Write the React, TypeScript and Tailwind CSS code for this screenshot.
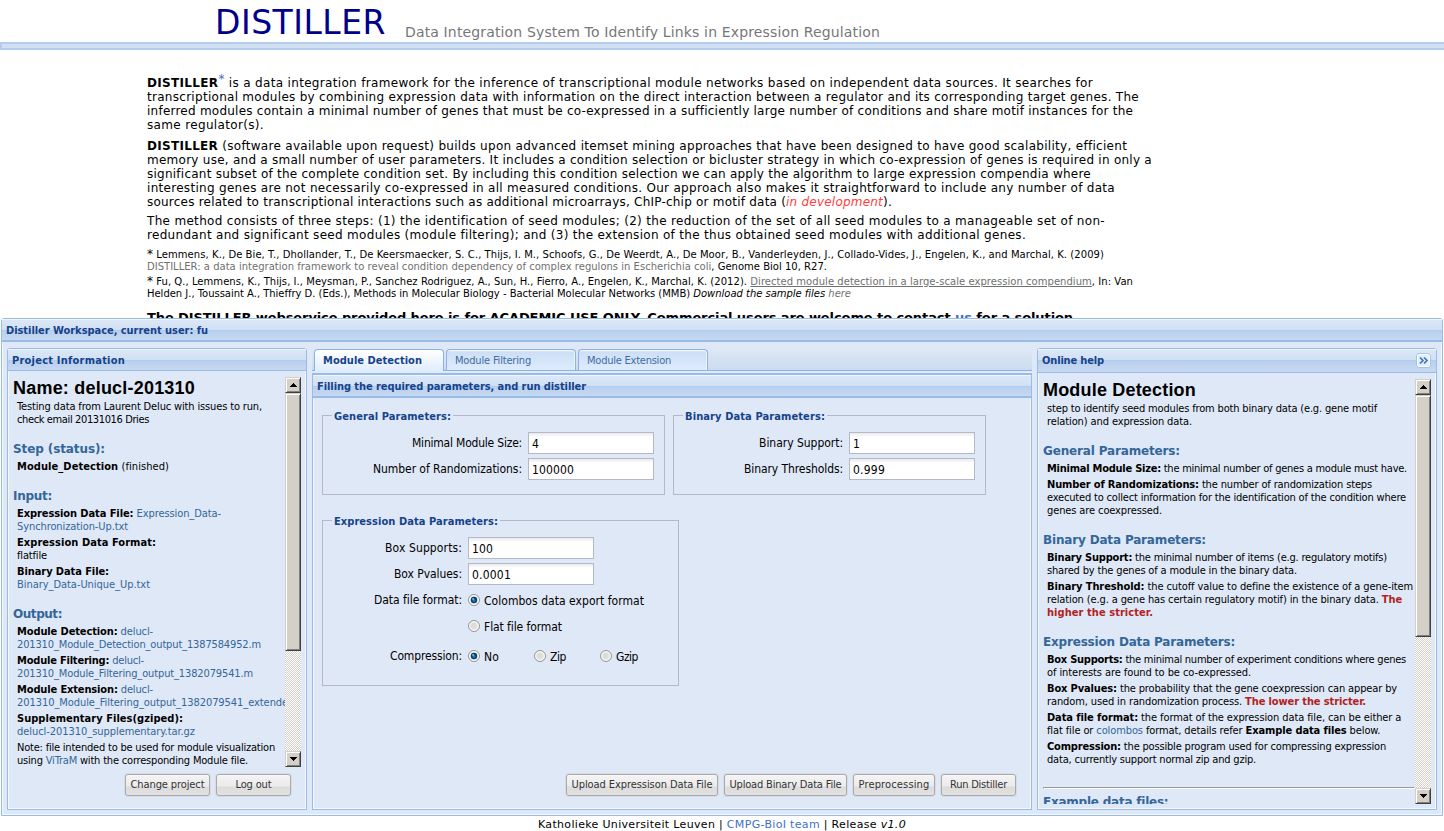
import { useLayoutEffect, useRef, type ReactNode } from "react";

/* One line of text whose tracking is adjusted so that it spans `w` pixels. */
function Fit({ w, children, className = "" }: { w: number; children: ReactNode; className?: string }) {
  const ref = useRef<HTMLSpanElement>(null);
  useLayoutEffect(() => {
    const el = ref.current;
    if (!el) return;
    el.style.letterSpacing = "0px";
    const natural = el.getBoundingClientRect().width;
    const count = Math.max(1, (el.textContent ?? "").length);
    el.style.letterSpacing = `${(w - natural) / count}px`;
  }, [w]);
  return (
    <span className={`block w-max ${className}`}>
      <span ref={ref} className="inline-block whitespace-pre">{children}</span>
    </span>
  );
}

const verdana = "font-['DejaVu_Sans',sans-serif]";
const tahoma = "font-['DejaVu_Sans_Condensed','DejaVu_Sans',sans-serif] [font-stretch:condensed]";
const headerFill =
  "bg-[linear-gradient(to_bottom,#f0f6fc_0,#f0f6fc_1px,#dae7f6_1px,#d1e0f3_11px,#aac8ec_11px,#b9d0ee_12px,#c6d8f1_21px)]";

function Link({ children }: { children: ReactNode }) {
  return <span className="text-[#336699]">{children}</span>;
}

function H3({ w, children }: { w: number; children: ReactNode }) {
  return (
    <h3 className="mt-4 mb-1 text-[12px] leading-[14px] font-bold text-[#336699] font-['DejaVu_Sans',sans-serif] [font-stretch:normal]">
      <Fit w={w}>{children}</Fit>
    </h3>
  );
}

function Para({ children }: { children: ReactNode }) {
  return <div className="mb-[3px] ml-1 text-[11px] leading-[13px] last:mb-0">{children}</div>;
}

function Section({ children }: { children: ReactNode }) {
  return <div className="flex flex-col">{children}</div>;
}

function Arrow({ up }: { up?: boolean }) {
  return (
    <div className="flex h-4 w-4 shrink-0 items-center justify-center border border-t-[#d4d0c8] border-l-[#d4d0c8] border-r-[#404040] border-b-[#404040] bg-[#d4d0c8] shadow-[inset_1px_1px_0_#fff,inset_-1px_-1px_0_#808080]">
      <svg width="7" height="4" viewBox="0 0 7 4" shapeRendering="crispEdges">
        <path d={up ? "M3 0h1v1h1v1h1v1h1v1H0V3h1V2h1V1h1z" : "M0 0h7v1H6v1H5v1H4v1H3V3H2V2H1V1H0z"} fill="#000" />
      </svg>
    </div>
  );
}

function Scrollbar({ thumb }: { thumb: string }) {
  return (
    <div className="flex w-4 shrink-0 flex-col bg-[#eae8e3] bg-[repeating-conic-gradient(#d4d0c8_0_25%,#fff_0_50%)] bg-[length:2px_2px]">
      <Arrow up />
      <div className={`${thumb} w-4 shrink-0 border border-t-[#d4d0c8] border-l-[#d4d0c8] border-r-[#404040] border-b-[#404040] bg-[#d4d0c8] shadow-[inset_1px_1px_0_#fff,inset_-1px_-1px_0_#808080]`} />
      <div className="flex-1" />
      <Arrow />
    </div>
  );
}

function Button({ box, w, children }: { box: string; w: number; children: ReactNode }) {
  return (
    <button className={`${box} flex h-[22px] items-center justify-center rounded-[3px] border border-[#aaa] bg-[linear-gradient(to_bottom,#fff_0,#f3f3f3_1px,#ebebeb_11px,#dcdcdc_12px,#e2e2e2_20px)] pt-px text-[11px] text-[#333] shadow-[0_0_0_1px_#d6dbe4]`}>
      <Fit w={w}>{children}</Fit>
    </button>
  );
}

function Field({ label, lw, labelBox, value, vw }: { label: string; lw: number; labelBox: string; value: string; vw: number }) {
  return (
    <div className="flex h-[26px] items-start">
      <div className={`${labelBox} flex justify-end pr-1.5 pt-[3px] leading-4`}>
        <Fit w={lw}>{label}</Fit>
      </div>
      <div className="h-[22px] w-[126px] border border-[#b5b8c8] bg-[linear-gradient(to_bottom,#e8eae8,#fff_4px)] pl-[3px] pt-[3px] leading-4">
        <Fit w={vw}>{value}</Fit>
      </div>
    </div>
  );
}

function Radio({ label, w, on }: { label: string; w: number; on?: boolean }) {
  return (
    <div className="flex h-4 w-[66px] items-center">
      <svg className="shrink-0" width="12" height="12" viewBox="0 0 12 12">
        <circle cx="6" cy="6" r="5.5" fill="#e4e4e2" stroke="#969696" />
        <circle cx="6" cy="6" r="4.3" fill="none" stroke="#fafafa" strokeWidth="1" />
        <circle cx="5.6" cy="5.6" r="2.6" fill="#dcdcda" />
        {on && <circle cx="6" cy="6" r="3.2" fill="#0b3d69" />}
        {on && <circle cx="6" cy="6.4" r="1.6" fill="#1b78b0" />}
        {on && <circle cx="5.1" cy="4.9" r="0.9" fill="#8ed4f2" />}
      </svg>
      <div className="pt-0.5 pl-1 leading-4"><Fit w={w}>{label}</Fit></div>
    </div>
  );
}

function Fieldset({ box, legend, w, children }: { box: string; legend: string; w: number; children: ReactNode }) {
  return (
    <fieldset className={`${box} border border-[#b5b8c8] text-[12px] text-black`}>
      <legend className="ml-[9px] h-[13px] px-0.5 text-[11px] leading-[15px] font-bold text-[#15428b]">
        <Fit w={w}>{legend}</Fit>
      </legend>
      {children}
    </fieldset>
  );
}

function Tab({ w, children, active }: { w: number; children: ReactNode; active?: boolean }) {
  return (
    <div
      className={
        active
          ? "h-[23px] w-[130px] rounded-t-[4px] border border-b-0 border-[#8db2e3] bg-[linear-gradient(to_bottom,#fff,#deecfd)] pl-2 text-[11px] leading-[21px] font-bold text-[#15428b]"
          : "h-[21px] w-[130px] rounded-t-[4px] border border-b-0 border-[#8db2e3] bg-[linear-gradient(to_bottom,#fafcff_0,#cddff5_2px,#deecfd)] pl-2 text-[11px] leading-[21px] text-[#416aa3] shadow-[inset_-1px_0_0_#eef5fe]"
      }
    >
      <Fit w={w}>{children}</Fit>
    </div>
  );
}

export default function App() {
  return (
    <div className={`relative flex h-[831px] w-[1444px] flex-col overflow-hidden bg-white text-black ${verdana}`}>
      <header className="flex h-[42px] shrink-0 items-start pl-[215px]">
        <h1 className="w-[190px] pt-1 text-[33px] leading-[38px] text-[#00008b]"><Fit w={171}>DISTILLER</Fit></h1>
        <div className="pt-[23px] text-[14px] leading-[18px] text-[#777]">
          <Fit w={475}>Data Integration System To Identify Links in Expression Regulation</Fit>
        </div>
      </header>
      <div className="h-2 shrink-0 border-2 border-r-0 border-[#b3cdee] bg-[#d0e0f2]" />

      <main className="h-[268px] shrink-0 overflow-hidden pt-[26px] pl-[147px] text-[12px] leading-[14px]">
        <div className="mb-[7px]">
          <Fit w={946}><b>DISTILLER</b><span className="relative -top-1 text-[12px] leading-none text-[#4070c8]">*</span> is a data integration framework for the inference of transcriptional module networks based on independent data sources. It searches for</Fit>
          <Fit w={992}>transcriptional modules by combining expression data with information on the direct interaction between a regulator and its corresponding target genes. The</Fit>
          <Fit w={986}>inferred modules contain a minimal number of genes that must be co-expressed in a sufficiently large number of conditions and share motif instances for the</Fit>
          <Fit w={117}>same regulator(s).</Fit>
        </div>
        <div className="mb-[5px]">
          <Fit w={980}><b>DISTILLER</b> (software available upon request) builds upon advanced itemset mining approaches that have been designed to have good scalability, efficient</Fit>
          <Fit w={1005}>memory use, and a small number of user parameters. It includes a condition selection or bicluster strategy in which co-expression of genes is required in only a</Fit>
          <Fit w={944}>significant subset of the complete condition set. By including this condition selection we can apply the algorithm to large expression compendia where</Fit>
          <Fit w={968}>interesting genes are not necessarily co-expressed in all measured conditions. Our approach also makes it straightforward to include any number of data</Fit>
          <Fit w={745}>sources related to transcriptional interactions such as additional microarrays, ChIP-chip or motif data (<i className="text-[#ff4040]">in development</i>).</Fit>
        </div>
        <div className="mb-1.5">
          <Fit w={958}>The method consists of three steps: (1) the identification of seed modules; (2) the reduction of the set of all seed modules to a manageable set of non-</Fit>
          <Fit w={879}>redundant and significant seed modules (module filtering); and (3) the extension of the thus obtained seed modules with additional genes.</Fit>
        </div>
        <div className="mb-0.5 text-[10px] leading-[12px]">
          <Fit w={957}><span className="text-[12px] leading-none">*</span> Lemmens, K., De Bie, T., Dhollander, T., De Keersmaecker, S. C., Thijs, I. M., Schoofs, G., De Weerdt, A., De Moor, B., Vanderleyden, J., Collado-Vides, J., Engelen, K., and Marchal, K. (2009)</Fit>
          <Fit w={680}><span className="text-[#707070]">DISTILLER: a data integration framework to reveal condition dependency of complex regulons in Escherichia coli</span>, Genome Biol 10, R27.</Fit>
        </div>
        <div className="mb-2.5 text-[10px] leading-[12px]">
          <Fit w={986}><span className="text-[12px] leading-none">*</span> Fu, Q., Lemmens, K., Thijs, I., Meysman, P., Sanchez Rodriguez, A., Sun, H., Fierro, A., Engelen, K., Marchal, K. (2012). <span className="text-[#707070] underline">Directed module detection in a large-scale expression compendium</span>, In: Van</Fit>
          <Fit w={704}>Helden J., Toussaint A., Thieffry D. (Eds.), Methods in Molecular Biology - Bacterial Molecular Networks (MMB) <i>Download the sample files <span className="text-[#707070]">here</span></i></Fit>
        </div>
        <div className="text-[13px] leading-[16px] font-bold">
          <Fit w={926}>The DISTILLER webservice provided here is for ACADEMIC USE ONLY. Commercial users are welcome to contact <span className="text-[#4070c8]">us</span> for a solution</Fit>
        </div>
      </main>

      <div className={`mr-px ml-px flex h-[498px] shrink-0 flex-col rounded-t-[3px] border border-[#99bbe8] bg-[#dfe8f6] shadow-[inset_0_0_0_1px_#f4f8fd] ${tahoma}`}>
        <div className={`h-[23px] shrink-0 border-b-2 border-[#99bbe8] pl-1 text-[11px] leading-[23px] font-bold text-[#15428b] ${headerFill}`}>
          <Fit w={202}>Distiller Workspace, current user: fu</Fit>
        </div>

        <div className="flex min-h-0 flex-1 pt-1.5 pr-[5px] pb-[5px] pl-[5px]">
          <section className="flex w-[300px] shrink-0 flex-col rounded-t-[3px] border border-[#99bbe8] shadow-[inset_0_0_0_1px_#f4f8fd]">
            <div className={`h-[22px] shrink-0 border-b border-[#99bbe8] pl-1 text-[11px] leading-[23px] font-bold text-[#15428b] ${headerFill}`}>
              <Fit w={113}>Project Information</Fit>
            </div>
            <div className="mt-[6px] mr-[5px] ml-[5px] flex h-[390px] shrink-0">
              <div className="w-[272px] shrink-0 overflow-hidden">
                <h2 className="mb-0.5 h-[21px] text-[18px] leading-[22px] font-bold font-['Liberation_Sans',sans-serif] [font-stretch:normal]"><Fit w={182}>Name: delucl-201310</Fit></h2>
                <Section>
                  <Para>
                    <Fit w={245}>Testing data from Laurent Deluc with issues to run,</Fit>
                    <Fit w={132}>check email 20131016 Dries</Fit>
                  </Para>
                </Section>
                <H3 w={92}>Step (status):</H3>
                <Section>
                  <Para><Fit w={152}><b>Module_Detection</b> (finished)</Fit></Para>
                </Section>
                <H3 w={39}>Input:</H3>
                <Section>
                  <Para>
                    <Fit w={204}><b>Expression Data File:</b> <Link>Expression_Data-</Link></Fit>
                    <Fit w={111}><Link>Synchronization-Up.txt</Link></Fit>
                  </Para>
                  <Para>
                    <Fit w={139}><b>Expression Data Format:</b></Fit>
                    <Fit w={30}>flatfile</Fit>
                  </Para>
                  <Para>
                    <Fit w={92}><b>Binary Data File:</b></Fit>
                    <Fit w={133}><Link>Binary_Data-Unique_Up.txt</Link></Fit>
                  </Para>
                </Section>
                <H3 w={49}>Output:</H3>
                <Section>
                  <Para>
                    <Fit w={136}><b>Module Detection:</b> <Link>delucl-</Link></Fit>
                    <Fit w={244}><Link>201310_Module_Detection_output_1387584952.m</Link></Fit>
                  </Para>
                  <Para>
                    <Fit w={127}><b>Module Filtering:</b> <Link>delucl-</Link></Fit>
                    <Fit w={236}><Link>201310_Module_Filtering_output_1382079541.m</Link></Fit>
                  </Para>
                  <Para>
                    <Fit w={136}><b>Module Extension:</b> <Link>delucl-</Link></Fit>
                    <Fit w={290}><Link>201310_Module_Filtering_output_1382079541_extended.m</Link></Fit>
                  </Para>
                  <Para>
                    <Fit w={166}><b>Supplementary Files(gziped):</b></Fit>
                    <Fit w={178}><Link>delucl-201310_supplementary.tar.gz</Link></Fit>
                  </Para>
                  <Para>
                    <Fit w={258}>Note: file intended to be used for module visualization</Fit>
                    <Fit w={231}>using <Link>ViTraM</Link> with the corresponding Module file.</Fit>
                  </Para>
                </Section>
              </div>
              <Scrollbar thumb="h-[258px]" />
            </div>
            <div className="flex justify-end gap-1.5 pt-[7px] pr-[15px]">
              <Button box="w-[85px]" w={74}>Change project</Button>
              <Button box="w-[75px]" w={36}>Log out</Button>
            </div>
          </section>

          <section className="ml-[5px] flex w-[720px] shrink-0 flex-col">
            <div className="flex h-[23px] shrink-0 items-start gap-0.5 border-b border-[#8db2e3] bg-[linear-gradient(to_bottom,#dfe8f6,#cbdbef)] pt-px pl-0.5">
              <Tab w={99} active>Module Detection</Tab>
              <Tab w={76}>Module Filtering</Tab>
              <Tab w={84}>Module Extension</Tab>
            </div>
            <div className="h-[2px] shrink-0 bg-[#deecfd]" />
            <div className="flex min-h-0 flex-1 flex-col border border-[#99bbe8] shadow-[inset_0_0_0_1px_#f4f8fd]">
              <div className={`h-[24px] shrink-0 border-t border-b-2 border-[#99bbe8] pl-1 text-[11px] leading-[23px] font-bold text-[#15428b] ${headerFill}`}>
                <Fit w={269}>Filling the required parameters, and run distiller</Fit>
              </div>
              <div className="flex flex-1 flex-col pr-[15px] pb-[13px] pl-[9px]">
                <div className="flex gap-2 pt-[11px]">
                  <Fieldset box="h-[86px] w-[343px]" legend="General Parameters:" w={117}>
                    <div className="pt-[10px]">
                      <Field label="Minimal Module Size:" lw={110} labelBox="w-[205px]" value="4" vw={7} />
                      <Field label="Number of Randomizations:" lw={149} labelBox="w-[205px]" value="100000" vw={42} />
                    </div>
                  </Fieldset>
                  <Fieldset box="h-[86px] w-[313px]" legend="Binary Data Parameters:" w={140}>
                    <div className="pt-[10px]">
                      <Field label="Binary Support:" lw={84} labelBox="w-[175px]" value="1" vw={7} />
                      <Field label="Binary Thresholds:" lw={99} labelBox="w-[175px]" value="0.999" vw={32} />
                    </div>
                  </Fieldset>
                </div>
                <Fieldset box="mt-[19px] h-[172px] w-[357px]" legend="Expression Data Parameters:" w={164}>
                  <div className="pt-[10px]">
                    <Field label="Box Supports:" lw={77} labelBox="w-[145px]" value="100" vw={21} />
                    <Field label="Box Pvalues:" lw={68} labelBox="w-[145px]" value="0.0001" vw={39} />
                    <div className="flex h-[26px]">
                      <div className="flex w-[145px] justify-end pt-[3px] pr-1.5 leading-4"><Fit w={88}>Data file format:</Fit></div>
                      <div className="pt-[3px]"><Radio label="Colombos data export format" w={160} on /></div>
                    </div>
                    <div className="flex h-[30px] pt-[3px] pl-[145px]"><Radio label="Flat file format" w={78} /></div>
                    <div className="flex">
                      <div className="flex w-[145px] justify-end pt-[3px] pr-1.5 leading-4"><Fit w={72}>Compression:</Fit></div>
                      <div className="flex pt-[3px]">
                        <Radio label="No" w={15} on />
                        <Radio label="Zip" w={16} />
                        <Radio label="Gzip" w={22} />
                      </div>
                    </div>
                  </div>
                </Fieldset>
                <div className="mt-auto flex justify-end gap-1.5">
                  <Button box="w-[152px]" w={141}>Upload Expressison Data File</Button>
                  <Button box="w-[123px]" w={112}>Upload Binary Data File</Button>
                  <Button box="w-[82px]" w={71}>Preprocessing</Button>
                  <Button box="w-[75px]" w={57}>Run Distiller</Button>
                </div>
              </div>
            </div>
          </section>

          <section className="ml-[5px] flex w-[400px] shrink-0 flex-col rounded-t-[3px] border border-[#99bbe8] shadow-[inset_0_0_0_1px_#f4f8fd]">
            <div className={`flex h-[24px] shrink-0 items-start justify-between border-b border-[#99bbe8] pr-[5px] pl-1 text-[11px] leading-[23px] font-bold text-[#15428b] ${headerFill}`}>
              <Fit w={62}>Online help</Fit>
              <svg className="mt-1" width="15" height="15" viewBox="0 0 15 15">
                <rect x="0.5" y="0.5" width="14" height="14" rx="2.5" fill="#fff" stroke="#a3c3ec" />
                <rect x="2" y="2" width="11" height="11" fill="#e3eefb" />
                <path d="M4 4.5l3 3-3 3M8 4.5l3 3-3 3" fill="none" stroke="#3b72b5" strokeWidth="1.6" />
              </svg>
            </div>
            <div className="mt-[6px] mr-[5px] ml-[5px] flex h-[425px] shrink-0">
              <div className="w-[372px] shrink-0 overflow-hidden">
                <h2 className="mb-0.5 h-[21px] text-[18px] leading-[22px] font-bold font-['Liberation_Sans',sans-serif] [font-stretch:normal]"><Fit w={153}>Module Detection</Fit></h2>
                <Section>
                  <Para>
                    <Fit w={330}>step to identify seed modules from both binary data (e.g. gene motif</Fit>
                    <Fit w={145}>relation) and expression data.</Fit>
                  </Para>
                </Section>
                <H3 w={137}>General Parameters:</H3>
                <Section>
                  <Para><Fit w={360}><b>Minimal Module Size:</b> the minimal number of genes a module must have.</Fit></Para>
                  <Para>
                    <Fit w={325}><b>Number of Randomizations:</b> the number of randomization steps</Fit>
                    <Fit w={359}>executed to collect information for the identification of the condition where</Fit>
                    <Fit w={115}>genes are coexpressed.</Fit>
                  </Para>
                </Section>
                <H3 w={163}>Binary Data Parameters:</H3>
                <Section>
                  <Para>
                    <Fit w={340}><b>Binary Support:</b> the minimal number of items (e.g. regulatory motifs)</Fit>
                    <Fit w={250}>shared by the genes of a module in the binary data.</Fit>
                  </Para>
                  <Para>
                    <Fit w={366}><b>Binary Threshold:</b> the cutoff value to define the existence of a gene-item</Fit>
                    <Fit w={355}>relation (e.g. a gene has certain regulatory motif) in the binary data. <b className="text-[#b22222]">The</b></Fit>
                    <Fit w={106}><b className="text-[#b22222]">higher the stricter.</b></Fit>
                  </Para>
                </Section>
                <H3 w={192}>Expression Data Parameters:</H3>
                <Section>
                  <Para>
                    <Fit w={359}><b>Box Supports:</b> the minimal number of experiment conditions where genes</Fit>
                    <Fit w={204}>of interests are found to be co-expressed.</Fit>
                  </Para>
                  <Para>
                    <Fit w={350}><b>Box Pvalues:</b> the probability that the gene coexpression can appear by</Fit>
                    <Fit w={319}>random, used in randomization process. <b className="text-[#b22222]">The lower the stricter.</b></Fit>
                  </Para>
                  <Para>
                    <Fit w={354}><b>Data file format:</b> the format of the expression data file, can be either a</Fit>
                    <Fit w={333}>flat file or <Link>colombos</Link> format, details refer <b>Example data files</b> below.</Fit>
                  </Para>
                  <Para>
                    <Fit w={339}><b>Compression:</b> the possible program used for compressing expression</Fit>
                    <Fit w={209}>data, currently support normal zip and gzip.</Fit>
                  </Para>
                </Section>
                <div className="mt-[21px] -mb-[10px] h-0.5 border border-t-[#9a9a9a] border-l-[#9a9a9a] border-r-white border-b-white" />
                <H3 w={125}>Example data files:</H3>
              </div>
              <Scrollbar thumb="h-[242px]" />
            </div>
          </section>
        </div>
      </div>

      <footer className="flex flex-1 justify-center pt-0.5 text-[11px] leading-[13px]">
        <Fit w={368}>Katholieke Universiteit Leuven | <span className="text-[#4070c8]">CMPG-BioI team</span> | Release <i>v1.0</i></Fit>
      </footer>
    </div>
  );
}
